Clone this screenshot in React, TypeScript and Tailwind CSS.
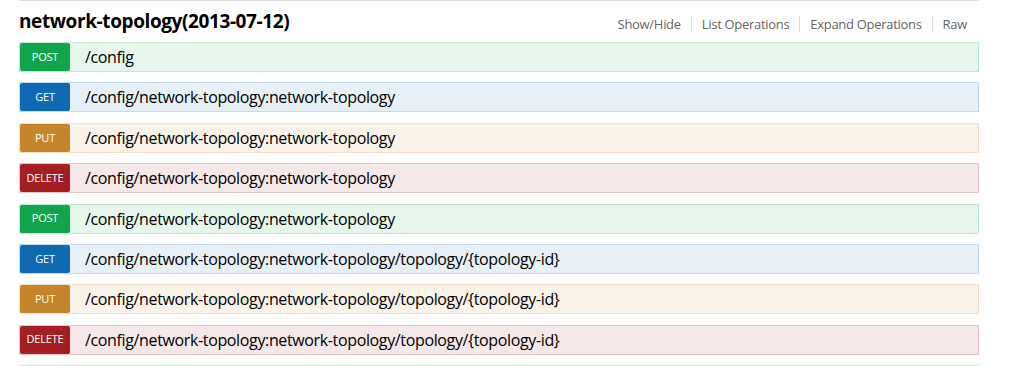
type Method = "POST" | "GET" | "PUT" | "DELETE";

type Operation = {
  method: Method;
  path: string;
};

const methodStyles: Record<Method, { badge: string; row: string }> = {
  POST: { badge: "bg-[#10a54a]", row: "bg-[#e7f6ec] border-[#c3e8d1]" },
  GET: { badge: "bg-[#0f6ab4]", row: "bg-[#e7f0f7] border-[#c3d9ec]" },
  PUT: { badge: "bg-[#c5862b]", row: "bg-[#f9f2e9] border-[#f0e0ca]" },
  DELETE: { badge: "bg-[#a41e22]", row: "bg-[#f5e8e8] border-[#e8c6c7]" },
};

const operations: Operation[] = [
  { method: "POST", path: "/config" },
  { method: "GET", path: "/config/network-topology:network-topology" },
  { method: "PUT", path: "/config/network-topology:network-topology" },
  { method: "DELETE", path: "/config/network-topology:network-topology" },
  { method: "POST", path: "/config/network-topology:network-topology" },
  { method: "GET", path: "/config/network-topology:network-topology/topology/{topology-id}" },
  { method: "PUT", path: "/config/network-topology:network-topology/topology/{topology-id}" },
  { method: "DELETE", path: "/config/network-topology:network-topology/topology/{topology-id}" },
];

const options = ["Show/Hide", "List Operations", "Expand Operations", "Raw"];

const OperationRow = ({ op }: { op: Operation }) => {
  const s = methodStyles[op.method];
  return (
    <li className={`flex h-[30px] items-center border ${s.row}`}>
      <span
        className={`flex h-[28px] w-[50px] items-center justify-center rounded-[2px] text-[11px] tracking-[-0.2px] text-white ${s.badge}`}
      >
        {op.method}
      </span>
      <span className="ml-[15px] text-[16px] tracking-[-0.36px] text-black">{op.path}</span>
    </li>
  );
};

export default function App() {
  return (
    <div className="h-[366px] overflow-hidden bg-white font-['Open_Sans',sans-serif]">
      <div className="ml-[19px] w-[960px] border-t border-[#ddd]">
        <div className="flex h-[41px] items-center justify-between">
          <h2 className="text-[19px] font-bold leading-none tracking-[-0.4px] text-black">
            network-topology(2013-07-12)
          </h2>
          <ul className="mr-[2px] mt-[4px] flex items-center text-[13px] tracking-[-0.3px] text-[#666]">
            {options.map((o, i) => (
              <li
                key={o}
                className={`px-[10px] leading-[16px] ${
                  i < options.length - 1 ? "border-r border-[#ddd]" : ""
                }`}
              >
                {o}
              </li>
            ))}
          </ul>
        </div>
        <ul className="flex flex-col gap-[10.4px]">
          {operations.map((op, i) => (
            <OperationRow key={i} op={op} />
          ))}
          {/* top edge of the next (POST) operation, cut by the viewport */}
          <li className="h-[30px] border border-[#c3e8d1] bg-[#e7f6ec]" />
        </ul>
      </div>
    </div>
  );
}
